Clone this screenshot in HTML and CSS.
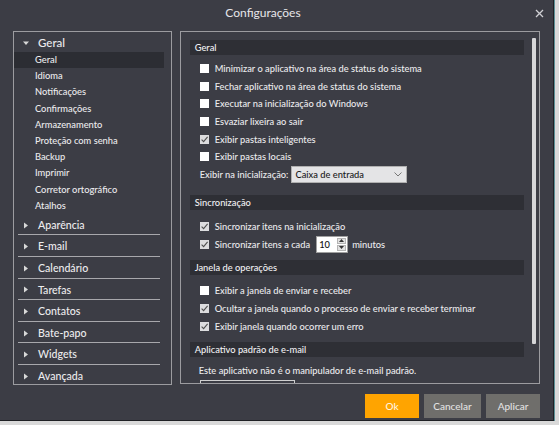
FILE: index.html
```html
<!DOCTYPE html>
<html lang="pt">
<head>
<meta charset="utf-8">
<title>Configurações</title>
<link rel="stylesheet" href="styles.css">
</head>
<body>
<div class="window">
  <div class="titlebar">
    <span class="title">Configurações</span>
    <span class="close"><svg width="9" height="9" viewBox="0 0 9 9"><path d="M1 1L8 8M8 1L1 8" stroke="#d0d0d4" stroke-width="1.3"/></svg></span>
  </div>
  <div class="main">
    <div class="nav">
      <div class="tree">
        <div class="nav-head"><span class="tri"><svg width="6" height="6" viewBox="0 0 6 6"><path d="M0 1.5H6L3 5Z" fill="#d8d8d8"/></svg></span>Geral</div>
        <div class="nav-item selected">Geral</div>
        <div class="nav-item">Idioma</div>
        <div class="nav-item">Notificações</div>
        <div class="nav-item">Confirmações</div>
        <div class="nav-item">Armazenamento</div>
        <div class="nav-item">Proteção com senha</div>
        <div class="nav-item">Backup</div>
        <div class="nav-item">Imprimir</div>
        <div class="nav-item">Corretor ortográfico</div>
        <div class="nav-item">Atalhos</div>
        <div class="nav-group"><span class="tri"><svg width="6" height="7" viewBox="0 0 6 7"><path d="M1 0.5V6.5L5 3.5Z" fill="#d8d8d8"/></svg></span>Aparência</div>
        <div class="nav-group"><span class="tri"><svg width="6" height="7" viewBox="0 0 6 7"><path d="M1 0.5V6.5L5 3.5Z" fill="#d8d8d8"/></svg></span>E-mail</div>
        <div class="nav-group"><span class="tri"><svg width="6" height="7" viewBox="0 0 6 7"><path d="M1 0.5V6.5L5 3.5Z" fill="#d8d8d8"/></svg></span>Calendário</div>
        <div class="nav-group"><span class="tri"><svg width="6" height="7" viewBox="0 0 6 7"><path d="M1 0.5V6.5L5 3.5Z" fill="#d8d8d8"/></svg></span>Tarefas</div>
        <div class="nav-group"><span class="tri"><svg width="6" height="7" viewBox="0 0 6 7"><path d="M1 0.5V6.5L5 3.5Z" fill="#d8d8d8"/></svg></span>Contatos</div>
        <div class="nav-group"><span class="tri"><svg width="6" height="7" viewBox="0 0 6 7"><path d="M1 0.5V6.5L5 3.5Z" fill="#d8d8d8"/></svg></span>Bate-papo</div>
        <div class="nav-group"><span class="tri"><svg width="6" height="7" viewBox="0 0 6 7"><path d="M1 0.5V6.5L5 3.5Z" fill="#d8d8d8"/></svg></span>Widgets</div>
        <div class="nav-group last"><span class="tri"><svg width="6" height="7" viewBox="0 0 6 7"><path d="M1 0.5V6.5L5 3.5Z" fill="#d8d8d8"/></svg></span>Avançada</div>
      </div>
    </div>
    <div class="content">
      <div class="scroll-area">
        <div class="sec-head">Geral</div>
        <div class="sec-body geral">
          <div class="row"><span class="cb"></span>Minimizar o aplicativo na área de status do sistema</div>
          <div class="row"><span class="cb"></span>Fechar aplicativo na área de status do sistema</div>
          <div class="row"><span class="cb"></span>Executar na inicialização do Windows</div>
          <div class="row"><span class="cb"></span>Esvaziar lixeira ao sair</div>
          <div class="row"><span class="cb checked"><svg width="9" height="9" viewBox="0 0 9 9"><path d="M1.6 4.6L3.6 6.6L7.6 1.8" fill="none" stroke="#505050" stroke-width="1.1"/></svg></span>Exibir pastas inteligentes</div>
          <div class="row"><span class="cb"></span>Exibir pastas locais</div>
          <div class="row select-row">Exibir na inicialização:<span class="select"><span>Caixa de entrada</span><svg width="8" height="5" viewBox="0 0 8 5"><path d="M0.5 0.5L4 4L7.5 0.5" fill="none" stroke="#777" stroke-width="1"/></svg></span></div>
        </div>
        <div class="sec-head">Sincronização</div>
        <div class="sec-body sync">
          <div class="row"><span class="cb checked"><svg width="9" height="9" viewBox="0 0 9 9"><path d="M1.6 4.6L3.6 6.6L7.6 1.8" fill="none" stroke="#505050" stroke-width="1.1"/></svg></span>Sincronizar itens na inicialização</div>
          <div class="row"><span class="cb checked"><svg width="9" height="9" viewBox="0 0 9 9"><path d="M1.6 4.6L3.6 6.6L7.6 1.8" fill="none" stroke="#505050" stroke-width="1.1"/></svg></span>Sincronizar itens a cada<span class="spin"><span class="spin-val">10</span><span class="spin-btns"><span class="sb"><svg width="5" height="3" viewBox="0 0 5 3"><path d="M0 3H5L2.5 0Z" fill="#333"/></svg></span><span class="sb"><svg width="5" height="3" viewBox="0 0 5 3"><path d="M0 0H5L2.5 3Z" fill="#333"/></svg></span></span></span>minutos</div>
        </div>
        <div class="sec-head">Janela de operações</div>
        <div class="sec-body ops">
          <div class="row"><span class="cb"></span>Exibir a janela de enviar e receber</div>
          <div class="row"><span class="cb checked"><svg width="9" height="9" viewBox="0 0 9 9"><path d="M1.6 4.6L3.6 6.6L7.6 1.8" fill="none" stroke="#505050" stroke-width="1.1"/></svg></span>Ocultar a janela quando o processo de enviar e receber terminar</div>
          <div class="row"><span class="cb checked"><svg width="9" height="9" viewBox="0 0 9 9"><path d="M1.6 4.6L3.6 6.6L7.6 1.8" fill="none" stroke="#505050" stroke-width="1.1"/></svg></span>Exibir janela quando ocorrer um erro</div>
        </div>
        <div class="sec-head">Aplicativo padrão de e-mail</div>
        <div class="sec-body mail">
          <div class="row text-row">Este aplicativo não é o manipulador de e-mail padrão.</div>
          <div class="default-btn"></div>
        </div>
      </div>
      <div class="scrollbar"></div>
    </div>
  </div>
  <div class="footer">
    <button class="btn ok">Ok</button>
    <button class="btn">Cancelar</button>
    <button class="btn">Aplicar</button>
  </div>
</div>
</body>
</html>
```

FILE: styles.css
```css
* { box-sizing: border-box; }
html, body { margin: 0; padding: 0; }
body {
  background: #d9d9d9;
  width: 559px;
  height: 425px;
  overflow: hidden;
  font-family: "Lato", "Open Sans", sans-serif;
  font-size: 9.3px;
  font-weight: 500;
  color: #ececee;
}
.window {
  width: 554px;
  height: 421px;
  background: #3c3d45;
  border-right: 1px solid #1f2024;
  border-bottom: 1px solid #1f2024;
  box-shadow: 1px 0 0 #5b8f95;
  display: flex;
  flex-direction: column;
}
.titlebar {
  height: 31px;
  display: flex;
  align-items: flex-start;
}
.title {
  flex: 1;
  text-align: center;
  font-size: 12px;
  font-weight: 400;
  line-height: 26px;
  color: #e6e6ea;
}
.close {
  width: 27px;
  height: 26px;
  display: flex;
  align-items: center;
  justify-content: center;
}
.main {
  display: flex;
  gap: 8px;
  padding: 0 13px;
  align-items: flex-start;
}
.nav {
  width: 159px;
  height: 354px;
  border: 1px solid #9c9ca0;
  overflow: hidden;
  padding-top: 2px;
}
.tree { width: 150px; }
.nav-head {
  height: 18px;
  line-height: 18px;
  font-size: 11.5px;
  display: flex;
  align-items: center;
}
.tri {
  width: 24px;
  padding-left: 9px;
  display: flex;
  align-items: center;
}
.nav-item {
  height: 16.2px;
  line-height: 16.2px;
  padding-left: 21px;
}
.nav-item.selected { background: #2c2d33; }
.nav-group {
  margin: 0 4px;
  padding-top: 2px;
  height: 21.6px;
  line-height: 18.6px;
  border-bottom: 1px solid #a8a8ac;
  font-size: 10.6px;
  display: flex;
  align-items: flex-start;
}
.nav-group .tri {
  width: 20px;
  padding-left: 5px;
  height: 18.6px;
}
.nav-group.last { border-bottom: none; }
.content {
  width: 361px;
  height: 353px;
  border: 1px solid #9c9ca0;
  display: flex;
}
.scroll-area {
  width: 343px;
  height: 100%;
  overflow: hidden;
  padding: 8px 0 0 9px;
}
.scrollbar {
  width: 4px;
  height: 306px;
  margin: 6px 0 0 8px;
  background: #d6d6d8;
  border-radius: 1px;
}
.sec-head {
  height: 15px;
  line-height: 15px;
  padding-left: 5px;
  background: #2e2f35;
  color: #f2f2f4;
}
.sec-body.geral { padding: 4.5px 0 11.7px; }
.sec-body.sync { padding: 7.8px 0 6.9px; }
.sec-body.ops { padding: 7.1px 0 6.8px; }
.sec-body.mail { padding: 4.5px 0 0; }
.row {
  height: 17.7px;
  display: flex;
  align-items: center;
  padding-left: 10px;
  white-space: nowrap;
}
.cb {
  width: 9px;
  height: 9px;
  background: #ffffff;
  margin-right: 6px;
  flex: none;
  display: flex;
}
.cb.checked { background: #dcdcde; }
.select-row { height: 17.6px; }
.select {
  margin-left: 3px;
  width: 116px;
  height: 17.6px;
  background: #e4e4e6;
  border: 1px solid #b0b0b0;
  color: #1a1a1a;
  display: flex;
  align-items: center;
  justify-content: space-between;
  padding: 0 4px 0 3px;
}
.spin {
  margin: 0 4px 0 6px;
  width: 32px;
  height: 16.6px;
  background: #ffffff;
  border: 1px solid #a0a0a0;
  color: #111;
  display: flex;
  align-items: center;
  justify-content: space-between;
}
.spin-val { padding-left: 2px; }
.spin-btns {
  width: 10px;
  height: 100%;
  display: flex;
  flex-direction: column;
  gap: 1px;
  padding: 1px 1px 1px 0;
}
.sb {
  flex: 1;
  background: #e2e2e2;
  border: 1px solid #b4b4b4;
  display: flex;
  align-items: center;
  justify-content: center;
}
.text-row { padding-left: 9px; }
.default-btn {
  margin: 0.7px 0 0 10px;
  width: 95px;
  height: 22px;
  border: 1px solid #d0d0d0;
}
.footer {
  display: flex;
  justify-content: flex-end;
  gap: 5px;
  padding: 9px 13px 0 0;
}
.btn {
  height: 24px;
  border: none;
  background: #6f6e6b;
  color: #e2e2e2;
  font-family: "Lato", "Open Sans", sans-serif;
  font-size: 10px;
  font-weight: 500;
  padding: 0;
  width: 54px;
}
.btn.ok { background: #ffa400; color: #fff5e0; }
.btn:nth-child(2) { width: 57px; }
```
